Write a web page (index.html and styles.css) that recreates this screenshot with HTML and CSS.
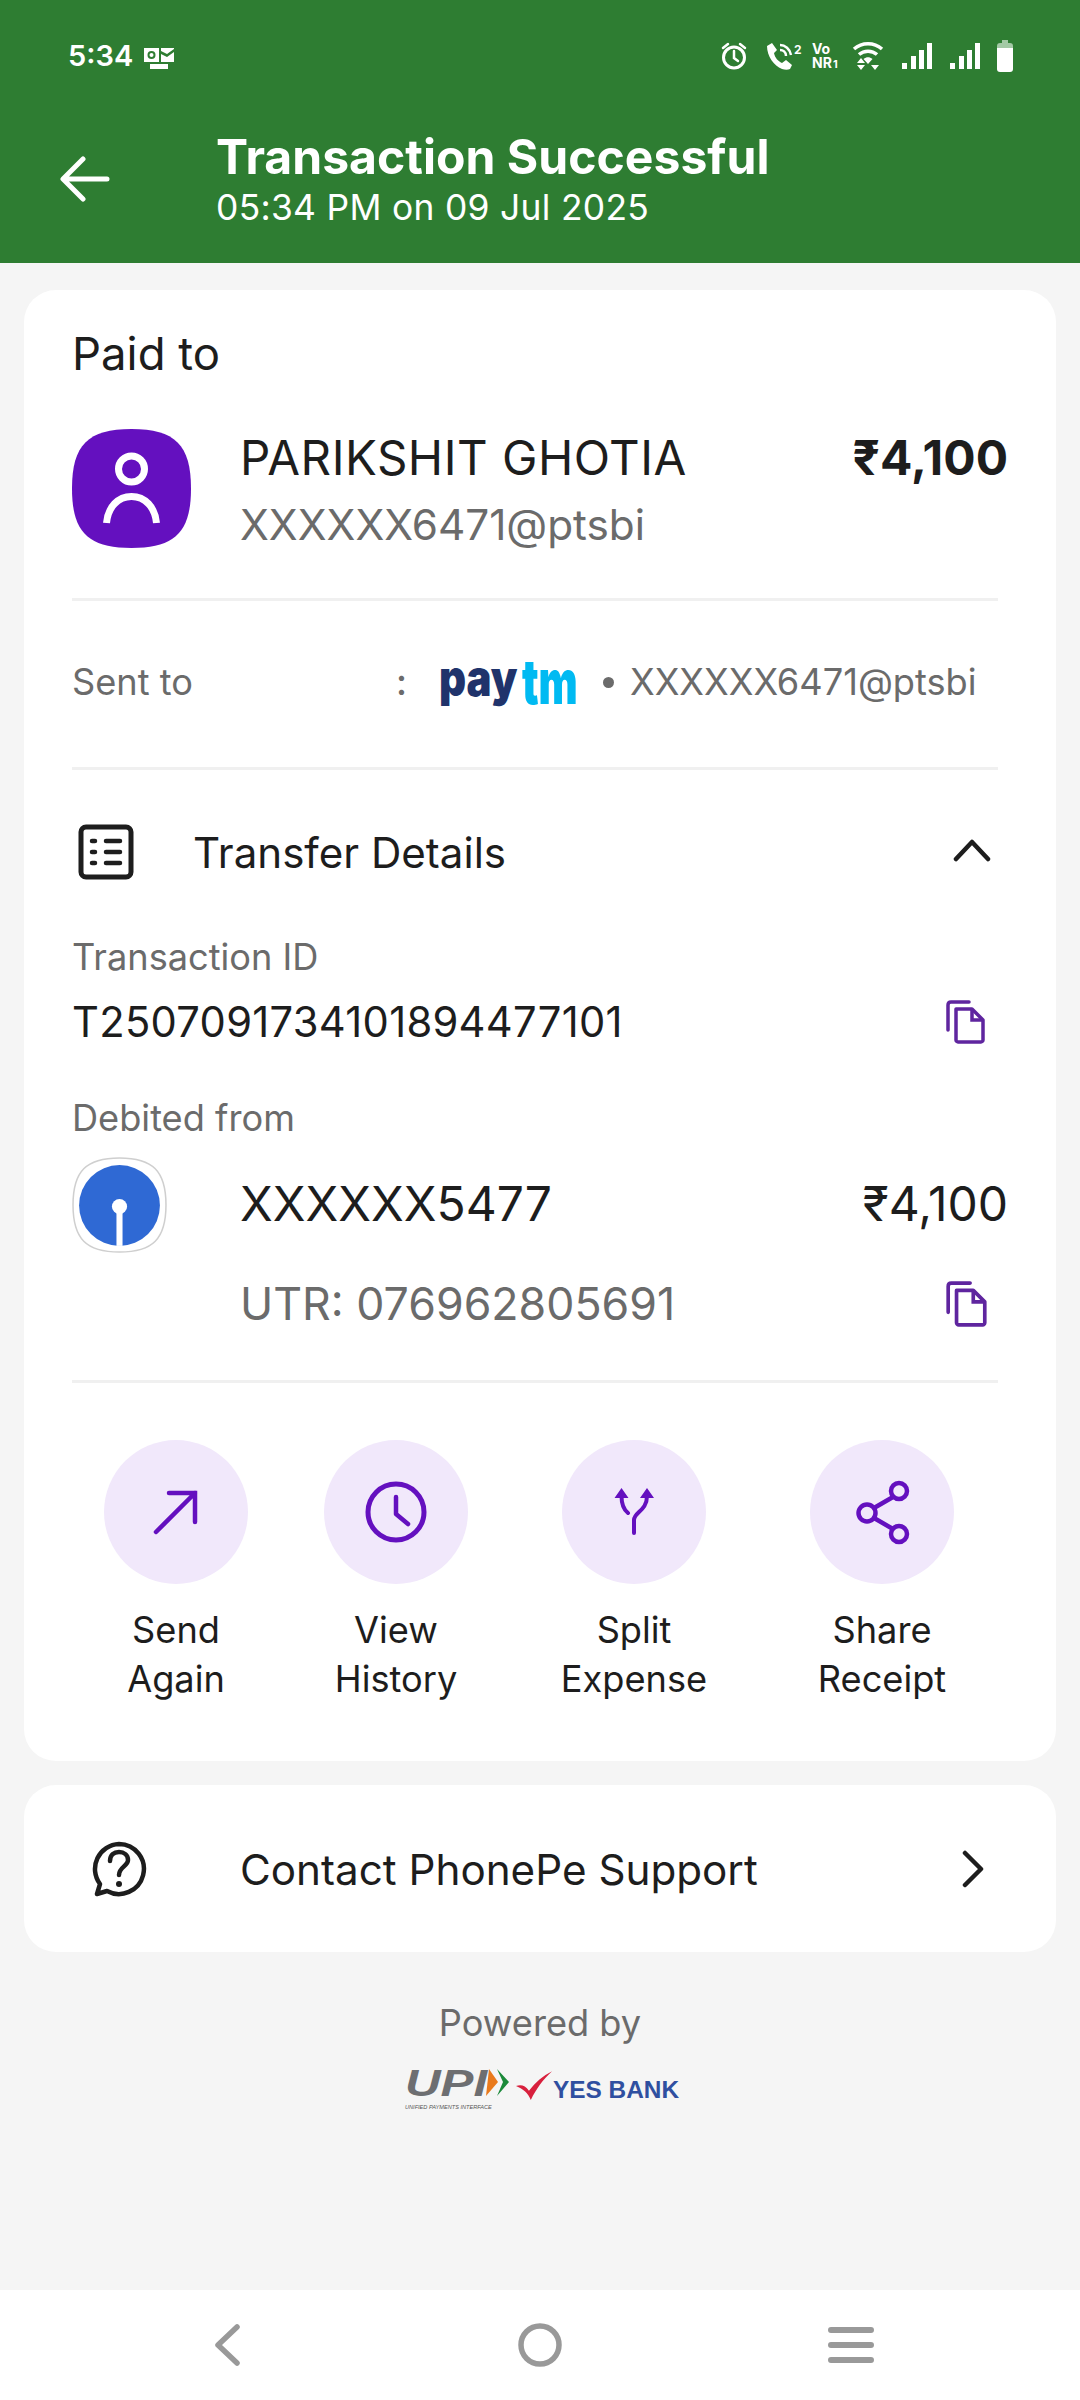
FILE: index.html
```html
<!DOCTYPE html>
<html lang="en">
<head>
<meta charset="utf-8">
<title>Transaction Successful</title>
<link rel="stylesheet" href="styles.css">
</head>
<body>
<div class="page">
  <header class="header">
    <div class="status">
      <div class="status-left">
        <span class="clock">5:34</span>
        <svg class="ic-outlook" width="30" height="26" viewBox="0 0 30 26"><path fill="#fff" d="M0 5h15v14H0z"/><circle cx="7.500" cy="12" r="4" fill="#2e7d32"/><circle cx="7.500" cy="12" r="2" fill="#fff"/><path fill="#fff" d="M17 5h13v1L23 11l-6-3zM17 11l6 3 7-5v10H17zM6 21h18v5H6z"/></svg>
      </div>
      <div class="status-right">
        <svg class="ic-alarm" width="26" height="28" viewBox="0 0 26 28"><circle cx="13" cy="15.500" r="10.500" fill="none" stroke="#fff" stroke-width="3"/><path d="M13 9v7l4 3M2 6l5-4M24 6l-5-4" fill="none" stroke="#fff" stroke-width="2.500" stroke-linecap="round"/></svg>
        <svg class="ic-call" width="37" height="27" viewBox="0 0 37 27"><path fill="#fff" d="M1 3l5-3 5 7-3 3c1 5 4 8 8 10l4-3 6 5-2 4c-2 1-5 1-8 0C8 23 1 13 1 3z"/><path d="M14 2c5 0 10 4 11 10M14 7c3 0 6 2 6 6" fill="none" stroke="#fff" stroke-width="2.500"/><text x="28" y="11" class="tiny-num">2</text></svg>
        <span class="vonr"><span>Vo</span><span>NR<small>1</small></span></span>
        <svg class="ic-wifi" width="32" height="28" viewBox="0 0 32 28"><path d="M2 7c8-7 20-7 28 0M7 12.500c5-4.500 13-4.500 18 0" fill="none" stroke="#fff" stroke-width="3.500"/><path fill="#fff" d="M11.500 17c3-2.500 6-2.500 9 0L16 22zM5 21l4-5 4 5zM5 23h8l-4 5zM19 23h8l-4 5z"/></svg>
        <svg class="ic-signal" width="30" height="26" viewBox="0 0 30 26"><path fill="#fff" d="M0 20h5v6H0zM9 13h5v13H9zM17 7h5v19h-5zM25 0h5v26h-5z"/></svg>
        <svg class="ic-signal" width="30" height="26" viewBox="0 0 30 26"><path fill="#fff" d="M0 20h5v6H0zM9 13h5v13H9zM17 7h5v19h-5zM25 0h5v26h-5z"/></svg>
        <svg class="ic-battery" width="16" height="32" viewBox="0 0 16 32"><path fill="#a3c9a5" d="M5 0h6v3h2c2 0 3 1 3 3v3H0V6c0-2 1-3 3-3h2z"/><path fill="#fff" d="M0 8h16v21c0 2-1 3-3 3H3c-2 0-3-1-3-3z"/></svg>
      </div>
    </div>
    <div class="toolbar">
      <svg class="ic-back" width="50" height="46" viewBox="0 0 50 46"><path d="M47 23H4M23 3L3 23l20 20" fill="none" stroke="#fff" stroke-width="5" stroke-linecap="round" stroke-linejoin="round"/></svg>
      <div class="titles">
        <div class="title">Transaction Successful</div>
        <div class="subtitle">05:34 PM on 09 Jul 2025</div>
      </div>
    </div>
  </header>

  <main class="main">
    <section class="card card-main">
      <div class="paid-label">Paid to</div>
      <div class="recipient">
        <svg class="avatar" width="119" height="119" viewBox="0 0 119 119"><path fill="#6410bf" d="M59.500 0C103 0 119 16 119 59.500S103 119 59.500 119 0 103 0 59.500 16 0 59.500 0z"/><circle cx="59.500" cy="40" r="13" fill="none" stroke="#fff" stroke-width="7"/><path d="M34.500 94C36 78 46 67.500 59.500 67.500S83 78 84.500 94" fill="none" stroke="#fff" stroke-width="7"/></svg>
        <div class="rec-text">
          <div class="name">PARIKSHIT GHOTIA</div>
          <div class="handle">XXXXXX6471@ptsbi</div>
        </div>
        <div class="amount">₹4,100</div>
      </div>
      <div class="divider divider-recipient"></div>
      <div class="sent-row">
        <span class="sent-label">Sent to</span>
        <span class="colon">:</span>
        <svg class="paytm" width="140" height="46" viewBox="0 0 140 46"><text transform="translate(0 35) scale(.84 1)" class="pay">pay</text><text transform="translate(83 43) scale(.67 1)" class="tm">tm</text></svg>
        <span class="dot"></span>
        <span class="sent-handle">XXXXXX6471@ptsbi</span>
      </div>
      <div class="divider"></div>
      <div class="transfer-row">
        <svg class="ic-list" width="56" height="56" viewBox="0 0 56 56"><rect x="3" y="3" width="50" height="50" rx="5" fill="none" stroke="#1d1d1d" stroke-width="5"/><path d="M14 17h3M28 17h14M14 28h3M28 28h14M14 39h3M28 39h14" fill="none" stroke="#1d1d1d" stroke-width="4.500" stroke-linecap="round"/></svg>
        <span class="transfer-label">Transfer Details</span>
        <svg class="ic-chev-up" width="38" height="24" viewBox="0 0 38 24"><path d="M3 21L19 4l16 17" fill="none" stroke="#1d1d1d" stroke-width="4.500" stroke-linecap="round" stroke-linejoin="round"/></svg>
      </div>
      <div class="muted-label">Transaction ID</div>
      <div class="txn-row">
        <span class="txn-id">T2507091734101894477101</span>
        <svg class="ic-copy" width="40" height="44" viewBox="0 0 40 44"><path d="M23 2H5C3 2 2 3 2 5v25" fill="none" stroke="#5f259f" stroke-width="3.500" stroke-linecap="round"/><path d="M10 9h16l11 11v20c0 1-1 2-2 2H12c-1 0-2-1-2-2z" fill="none" stroke="#5f259f" stroke-width="3.500" stroke-linejoin="round"/><path d="M26 9v11h11" fill="none" stroke="#5f259f" stroke-width="3.500"/></svg>
      </div>
      <div class="muted-label debited">Debited from</div>
      <div class="bank">
        <svg class="sbi" width="95" height="96" viewBox="0 0 94 95"><path fill="#fff" stroke="#cfcfcf" stroke-width="1.500" d="M47 1C80 1 93 14 93 47.500S80 94 47 94 1 81 1 47.500 14 1 47 1z"/><circle cx="47" cy="48" r="40" fill="#2f69d4"/><circle cx="47" cy="49" r="7.500" fill="#fff"/><rect x="44" y="50" width="6" height="38" fill="#fff"/></svg>
        <div class="bank-text">
          <div class="bank-top"><span class="acct">XXXXXX5477</span><span class="bank-amount">₹4,100</span></div>
          <div class="bank-bottom"><span class="utr">UTR: 076962805691</span>
            <svg class="ic-copy ic-copy-lg" width="42" height="46" viewBox="0 0 40 44"><path d="M23 2H5C3 2 2 3 2 5v25" fill="none" stroke="#5f259f" stroke-width="3.500" stroke-linecap="round"/><path d="M10 9h16l11 11v20c0 1-1 2-2 2H12c-1 0-2-1-2-2z" fill="none" stroke="#5f259f" stroke-width="3.500" stroke-linejoin="round"/><path d="M26 9v11h11" fill="none" stroke="#5f259f" stroke-width="3.500"/></svg>
          </div>
        </div>
      </div>
      <div class="divider divider-bank"></div>
      <div class="actions">
        <div class="action">
          <span class="circle"><svg width="144" height="144" viewBox="0 0 144 144"><path d="M52 92L91 53M65 53h26v29" fill="none" stroke="#6410bf" stroke-width="4.500" stroke-linecap="round"/></svg></span>
          <span class="action-label">Send<br>Again</span>
        </div>
        <div class="action">
          <span class="circle"><svg width="144" height="144" viewBox="0 0 144 144"><circle cx="72" cy="72" r="28" fill="none" stroke="#6410bf" stroke-width="5"/><path d="M72 57v17l12 10" fill="none" stroke="#6410bf" stroke-width="4.500" stroke-linecap="round" stroke-linejoin="round"/></svg></span>
          <span class="action-label">View<br>History</span>
        </div>
        <div class="action">
          <span class="circle"><svg width="144" height="144" viewBox="0 0 144 144"><path d="M72 93V80c0-8 13-9 13-24M66 73c-5-4-6.500-9-6.500-17" fill="none" stroke="#6410bf" stroke-width="4" stroke-linecap="round"/><path fill="#6410bf" d="M59.500 48l7 10h-14zM85 48l7 10H78z"/></svg></span>
          <span class="action-label">Split<br>Expense</span>
        </div>
        <div class="action">
          <span class="circle"><svg width="144" height="144" viewBox="0 0 144 144"><path d="M64 68l19-11M64 78l19 11" fill="none" stroke="#6410bf" stroke-width="4.500"/><circle cx="89" cy="51" r="8" fill="none" stroke="#6410bf" stroke-width="4.500"/><circle cx="57" cy="73" r="8.500" fill="none" stroke="#6410bf" stroke-width="4.500"/><circle cx="89" cy="94" r="8" fill="none" stroke="#6410bf" stroke-width="4.500"/></svg></span>
          <span class="action-label">Share<br>Receipt</span>
        </div>
      </div>
    </section>

    <section class="card card-support">
      <svg class="ic-help" width="56" height="56" viewBox="0 0 56 56"><path d="M28 3a25 25 0 1 1-12 47l-10 3 3-10A25 25 0 0 1 28 3z" fill="none" stroke="#1d1d1d" stroke-width="4.500" stroke-linejoin="round"/><path d="M19 20c0-6 4-9 9-9s9 3 9 8c0 6-9 7-9 15" fill="none" stroke="#1d1d1d" stroke-width="4.500" stroke-linecap="round"/><circle cx="28" cy="43" r="3" fill="#1d1d1d"/></svg>
      <span class="support-label">Contact PhonePe Support</span>
      <svg class="ic-chev-right" width="24" height="38" viewBox="0 0 24 38"><path d="M4 3l16 16L4 35" fill="none" stroke="#1d1d1d" stroke-width="4.500" stroke-linecap="round" stroke-linejoin="round"/></svg>
    </section>

    <div class="powered">Powered by</div>
    <div class="partners">
      <svg class="upi" width="104" height="40" viewBox="0 0 104 40"><text transform="translate(0 28) scale(1.37 1)" class="upi-letters">UPI</text><path fill="#e97a1c" d="M84 1l9 13-12 14z"/><path fill="#1b8a3a" d="M92 1l12 13-12 14 6-14z"/><text x="0" y="41" class="upi-small">UNIFIED PAYMENTS INTERFACE</text></svg>
      <svg class="yes-check" width="37" height="32" viewBox="0 0 40 32"><path fill="#d8203d" d="M0 16c5-2 10-1 14 5C21 12 29 5 39 0 29 9 22 19 16 31 13 24 8 19 0 16z"/></svg>
      <span class="yes-text">YES BANK</span>
    </div>
  </main>

  <nav class="navbar">
    <svg width="26" height="42" viewBox="0 0 26 42"><path d="M23 3L4 21l19 18" fill="none" stroke="#999" stroke-width="5.500" stroke-linecap="round" stroke-linejoin="round"/></svg>
    <svg width="44" height="44" viewBox="0 0 44 44"><circle cx="22" cy="22" r="19" fill="none" stroke="#999" stroke-width="5.500"/></svg>
    <svg width="46" height="36" viewBox="0 0 46 36"><path d="M3 3h40M3 18h40M3 33h40" fill="none" stroke="#999" stroke-width="6" stroke-linecap="round"/></svg>
  </nav>
</div>
</body>
</html>
```

FILE: styles.css
```css
* { box-sizing: border-box; }
html, body { margin: 0; padding: 0; }
body { font-family: Inter, "Noto Sans", sans-serif; color: #1d1d1d; background: #f5f5f5; }
.page { width: 1080px; height: 2400px; display: flex; flex-direction: column; overflow: hidden; }

/* Header */
.header { height: 263px; padding-top: 36px; background: #2e7d32; color: #fff; flex: none; }
.status { height: 40px; padding: 0 67px 0 68px; display: flex; justify-content: space-between; align-items: center; }
.status-left { display: flex; align-items: center; gap: 11px; }
.clock { font-size: 29px; font-weight: 600; line-height: 40px; }
.status-right { display: flex; align-items: center; }
.ic-call { margin-left: 19px; }
.vonr { margin-left: 9px; width: 31px; display: flex; flex-direction: column; font-size: 14px; font-weight: 700; line-height: 14px; color: #fff; }
.vonr small { font-size: 11px; font-weight: 700; margin-left: 1px; }
.ic-wifi { margin-left: 9px; }
.ic-signal { margin-left: 18px; }
.ic-battery { margin-left: 17px; }
.tiny-num { font: 700 12px Inter, sans-serif; fill: #fff; }
.toolbar { display: flex; align-items: flex-start; padding: 52px 0 0 60px; }
.ic-back { flex: none; margin-top: 28px; }
.titles { margin-left: 106px; }
.title { font-size: 48.100px; font-weight: 700; line-height: 58px; white-space: nowrap; }
.subtitle { font-size: 35.400px; line-height: 44px; letter-spacing: .3px; white-space: nowrap; }

/* Main */
.main { flex: 1; padding: 27px 24px 0; display: flex; flex-direction: column; }
.card { background: #fff; border-radius: 32px; }
.card-main { height: 1471px; padding: 36px 48px 0 49px; }
.paid-label { font-size: 45.500px; line-height: 56px; margin-left: -1px; }
.recipient { margin-top: 47px; height: 119px; display: flex; align-items: flex-start; margin-left: -1px; }
.avatar { flex: none; }
.rec-text { margin-left: 49px; flex: 1; }
.name { font-size: 47.500px; line-height: 58px; letter-spacing: .5px; white-space: nowrap; }
.handle { font-size: 42.300px; line-height: 58px; margin-top: 9px; color: #6b6b6b; white-space: nowrap; }
.amount { font-size: 48px; font-weight: 700; line-height: 58px; }
.divider { height: 3px; background: #f0f0f0; margin: 0 10px 0 -1px; }
.divider-recipient { margin-top: 50px; }
.sent-row { height: 166px; display: flex; align-items: center; padding-bottom: 4px; margin-left: -1px; font-size: 36.200px; color: #6b6b6b; white-space: nowrap; }
.sent-label { width: 324px; }
.colon { width: 43px; font-weight: 500; }
.paytm { flex: none; overflow: visible; margin-top: 4px; }
.pay { font: 900 50px Inter, sans-serif; fill: #20336b; }
.tm { font: 900 62px Inter, sans-serif; fill: #00baf2; }
.dot { width: 11px; height: 11px; border-radius: 50%; background: #6b6b6b; margin: 0 16px 0 24px; flex: none; }
.sent-handle { flex: none; }
.transfer-row { height: 164px; display: flex; align-items: center; padding: 0 0 0 6px; margin-left: -1px; }
.ic-list { flex: none; }
.transfer-label { margin-left: 59px; font-size: 42.100px; flex: 1; }
.ic-chev-up { margin: 0 17px 5px 0; }
.muted-label { font-size: 36.200px; line-height: 44px; color: #6b6b6b; margin: 1px 0 -1px -1px; }
.txn-row { margin: 17px 0 0 -1px; height: 54px; display: flex; justify-content: space-between; align-items: center; padding-right: 22px; }
.txn-id { font-size: 41.700px; line-height: 54px; letter-spacing: .3px; }
.debited { margin-top: 47px; }
.bank { margin: 18px 0 0 -1px; display: flex; align-items: flex-start; }
.sbi { flex: none; }
.bank-text { margin-left: 73px; flex: 1; padding-top: 18px; }
.bank-top { display: flex; justify-content: space-between; }
.acct, .bank-amount { font-size: 48px; line-height: 58px; }
.bank-bottom { margin-top: 42px; display: flex; justify-content: space-between; align-items: center; padding-right: 20px; }
.utr { font-size: 44.700px; line-height: 58px; color: #6b6b6b; }
.divider-bank { margin-top: 47px; }
.actions { margin: 57px 0 0 31px; display: grid; grid-template-columns: 220px 238px 248px 144px; }
.action { width: 144px; display: flex; flex-direction: column; align-items: center; }
.circle { width: 144px; height: 144px; border-radius: 50%; background: #f1e8fb; display: block; }
.circle svg { display: block; }
.action-label { margin-top: 22px; font-size: 36.200px; line-height: 49px; text-align: center; white-space: nowrap; }

.card-support { margin-top: 24px; height: 167px; display: flex; align-items: center; padding: 1px 71px 0 67px; }
.ic-help { flex: none; }
.support-label { margin-left: 93px; font-size: 42.200px; flex: 1; }

.powered { margin-top: 49px; font-size: 36.200px; line-height: 44px; color: #6b6b6b; text-align: center; }
.partners { margin-top: 23px; display: flex; align-items: flex-end; padding-left: 381px; }
.upi { overflow: visible; flex: none; }
.upi-letters { font: italic 700 36px "Liberation Sans", sans-serif; fill: #6d6e71; }
.upi-small { font: italic 400 5.600px "Liberation Sans", sans-serif; fill: #555; }
.yes-check { margin: 0 0 6px 7px; flex: none; }
.yes-text { font: 700 24.400px/30px "Liberation Sans", sans-serif; color: #2f4fa0; margin-bottom: 3px; white-space: nowrap; }

/* Nav */
.navbar { height: 110px; flex: none; background: #fff; display: grid; grid-template-columns: 304px 310px 46px; align-items: center; padding-left: 214px; }
.navbar svg { display: block; }
```
